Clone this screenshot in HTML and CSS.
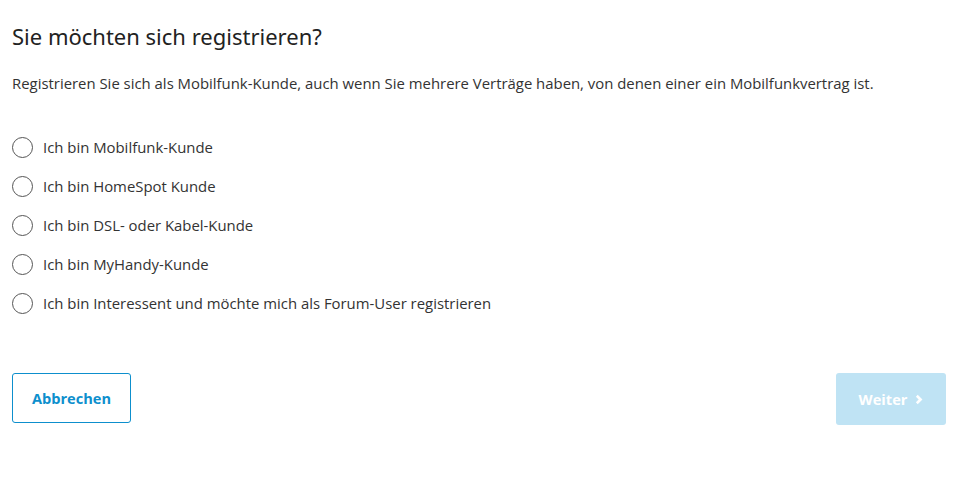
FILE: index.html
```html
<!DOCTYPE html>
<html lang="de">
  <head>
    <meta charset="UTF-8" />
    <title>Registrieren</title>
    <link rel="stylesheet" href="styles.css">
  </head>
  <body>
    <div class="container">
      <h1>Sie möchten sich registrieren?</h1>
      <p class="intro">
        Registrieren Sie sich als Mobilfunk-Kunde, auch wenn Sie mehrere Verträge haben, von denen einer ein Mobilfunkvertrag ist.
      </p>
      <div class="options">
        <label class="option"><span class="radio"></span>Ich bin Mobilfunk-Kunde</label>
        <label class="option"><span class="radio"></span>Ich bin HomeSpot Kunde</label>
        <label class="option"><span class="radio"></span>Ich bin DSL- oder Kabel-Kunde</label>
        <label class="option"><span class="radio"></span>Ich bin MyHandy-Kunde</label>
        <label class="option"><span class="radio"></span>Ich bin Interessent und möchte mich als Forum-User registrieren</label>
      </div>
      <div class="actions">
        <button class="btn btn-secondary">Abbrechen</button>
        <button class="btn btn-primary" disabled>
          Weiter
          <svg width="8" height="11" viewBox="0 0 8 11"><path d="M1.8 1.8 L5.6 5.5 L1.8 9.2" fill="none" stroke="#fff" stroke-width="2.6"/></svg>
        </button>
      </div>
    </div>
  </body>
</html>
```

FILE: styles.css
```css
* {
  box-sizing: border-box;
  margin: 0;
  padding: 0;
}
body {
  font-family: "Open Sans", "Noto Sans", sans-serif;
  background: #fff;
  color: #333;
}
.container {
  padding: 21px 32px 0 12px;
}
h1 {
  font-family: "Noto Sans", "Open Sans", sans-serif;
  font-weight: 400;
  font-size: 22px;
  color: #222;
  line-height: 30px;
}
.intro {
  margin-top: 21px;
  font-size: 14.9px;
  line-height: 22px;
  color: #333;
}
.options {
  margin-top: 42px;
  display: flex;
  flex-direction: column;
  gap: 17px;
}
.option {
  display: flex;
  align-items: center;
  font-size: 14.9px;
  line-height: 22px;
  color: #333;
}
.radio {
  width: 21px;
  height: 21px;
  border: 1px solid #555;
  border-radius: 50%;
  margin-right: 10px;
}
.actions {
  margin-top: 59px;
  display: flex;
  justify-content: space-between;
  align-items: flex-start;
}
.btn {
  font-family: "Open Sans", "Noto Sans", sans-serif;
  font-weight: 700;
  font-size: 14.6px;
  border-radius: 3px;
  height: 50px;
  cursor: pointer;
}
.btn-secondary {
  width: 119px;
  background: #fff;
  color: #0d8fcd;
  border: 1px solid #0d8fcd;
}
.btn-primary {
  width: 110px;
  height: 52px;
  background: #bfe3f4;
  color: #fff;
  border: none;
  display: flex;
  align-items: center;
  justify-content: center;
  gap: 8px;
}
```
